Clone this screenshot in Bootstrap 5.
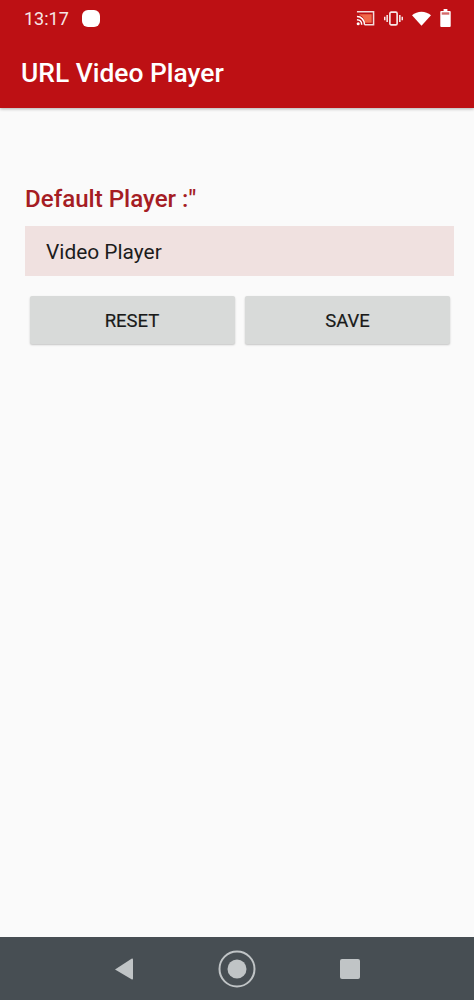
<!doctype html>
<html lang="en">
<head>
<meta charset="utf-8">
<meta name="viewport" content="width=device-width, initial-scale=1">
<link rel="stylesheet" href="https://cdn.jsdelivr.net/npm/bootstrap@5.3.0/dist/css/bootstrap.min.css">
<style>
html,body{height:100%;}
body{font-family:Roboto,"Liberation Sans",sans-serif;background:#fafafa;color:#1c1c1c;}
.screen{height:1000px;width:474px;overflow:hidden;}
.appbar{background:#bd1014;height:108px;color:#fff;box-shadow:0 1px 3px rgba(0,0,0,.3);}
.statusrow{height:36px;padding:0 23px 0 24px;}
.clock{font-size:18px;color:#f6e6e6;}
.notif{width:18px;height:17px;background:#fff;border-radius:6px;margin-left:13px;}
.statusicons{gap:9px;}
.apptitle{font-size:26.4px;font-weight:500;line-height:28px;margin:23px 0 0 21px;}
.content{padding:0 20px 0 25px;}
.fieldlabel{color:#a51d24;font-size:24.1px;font-weight:500;line-height:28px;margin:77px 0 13px 0;}
.playerbox{background:#f0e1e0;height:50px;font-size:20.9px;padding:3px 0 0 21px;}
.actions{padding:20px 4px 0 4.500px;}
.actbtn{background:#d8dad9;border:0;border-radius:2px;height:48px;font-size:18.5px;font-weight:400;color:#1a1a1a;box-shadow:0 1px 2px rgba(0,0,0,.22);width:205px;padding:4px 0 0;-webkit-text-stroke:.2px #1a1a1a;}
.navrow{background:#474e53;height:63px;gap:84px;padding-right:1px;}
</style>
</head>
<body>
<div class="screen d-flex flex-column">
  <header class="appbar flex-shrink-0">
    <div class="statusrow d-flex align-items-center justify-content-between">
      <div class="d-flex align-items-center">
        <span class="clock">13:17</span>
        <span class="notif"></span>
      </div>
      <div class="statusicons d-flex align-items-center">
        <svg width="19" height="17" viewBox="0 0 20 17" aria-hidden="true"><path d="M1 1.500h17.500v13.500H9" fill="none" stroke="#f4dcdc" stroke-width="1.600"/><path d="M3.500 4h13v9H9.500C9 8.500 7 5.500 3.500 5z" fill="#f1694a"/><path d="M1 6.500c4.600 0 8 3.500 8 8.500M1 9.800c3 0 5 2.200 5 5.200" fill="none" stroke="#fff" stroke-width="1.600"/><circle cx="2.300" cy="14" r="1.600" fill="#fff"/></svg>
        <svg width="19" height="17" viewBox="0 0 21 17" aria-hidden="true"><rect x="6.500" y="1.500" width="8" height="14" rx="1.500" fill="none" stroke="#f8e8e8" stroke-width="1.800"/><path d="M3.500 4.500v8M17.500 4.500v8M.8 6.500v4M20.200 6.500v4" stroke="#f8e8e8" stroke-width="1.700" fill="none"/></svg>
        <svg width="19" height="15" viewBox="0 0 21 16" aria-hidden="true"><path d="M0 4.500C5.800-.8 15.200-.8 21 4.500L10.500 16z" fill="#fff"/></svg>
        <svg width="11" height="18" viewBox="0 0 11 19" aria-hidden="true"><path d="M3.500 0h4v2h2.500a1 1 0 0 1 1 1v15a1 1 0 0 1-1 1H1a1 1 0 0 1-1-1V3a1 1 0 0 1 1-1h2.500z" fill="#fff"/><rect x="1.500" y="3.500" width="8" height="2.500" fill="#d46a6a"/></svg>
      </div>
    </div>
    <div class="apptitle">URL Video Player</div>
  </header>
  <main class="content flex-grow-1">
    <div class="fieldlabel">Default Player :"</div>
    <div class="playerbox d-flex align-items-center">Video Player</div>
    <div class="actions d-flex justify-content-between">
      <button type="button" class="btn actbtn">RESET</button>
      <button type="button" class="btn actbtn">SAVE</button>
    </div>
  </main>
  <nav class="navrow flex-shrink-0 d-flex align-items-center justify-content-center">
    <svg width="20" height="22" viewBox="0 0 20 22" aria-hidden="true"><path d="M19 1.500v19a1 1 0 0 1-1.500.800L1 11.500 17.500.700A1 1 0 0 1 19 1.500z" fill="#c0c4c6"/></svg>
    <svg width="38" height="38" viewBox="0 0 38 38" aria-hidden="true"><circle cx="19" cy="19" r="17.500" fill="none" stroke="#c0c4c6" stroke-width="2"/><circle cx="19" cy="19" r="9.500" fill="#c0c4c6"/></svg>
    <svg width="20" height="20" viewBox="0 0 20 20" aria-hidden="true"><rect width="20" height="20" rx="2" fill="#c0c4c6"/></svg>
  </nav>
</div>
<script src="https://cdn.jsdelivr.net/npm/bootstrap@5.3.0/dist/js/bootstrap.bundle.min.js"></script>
</body>
</html>
